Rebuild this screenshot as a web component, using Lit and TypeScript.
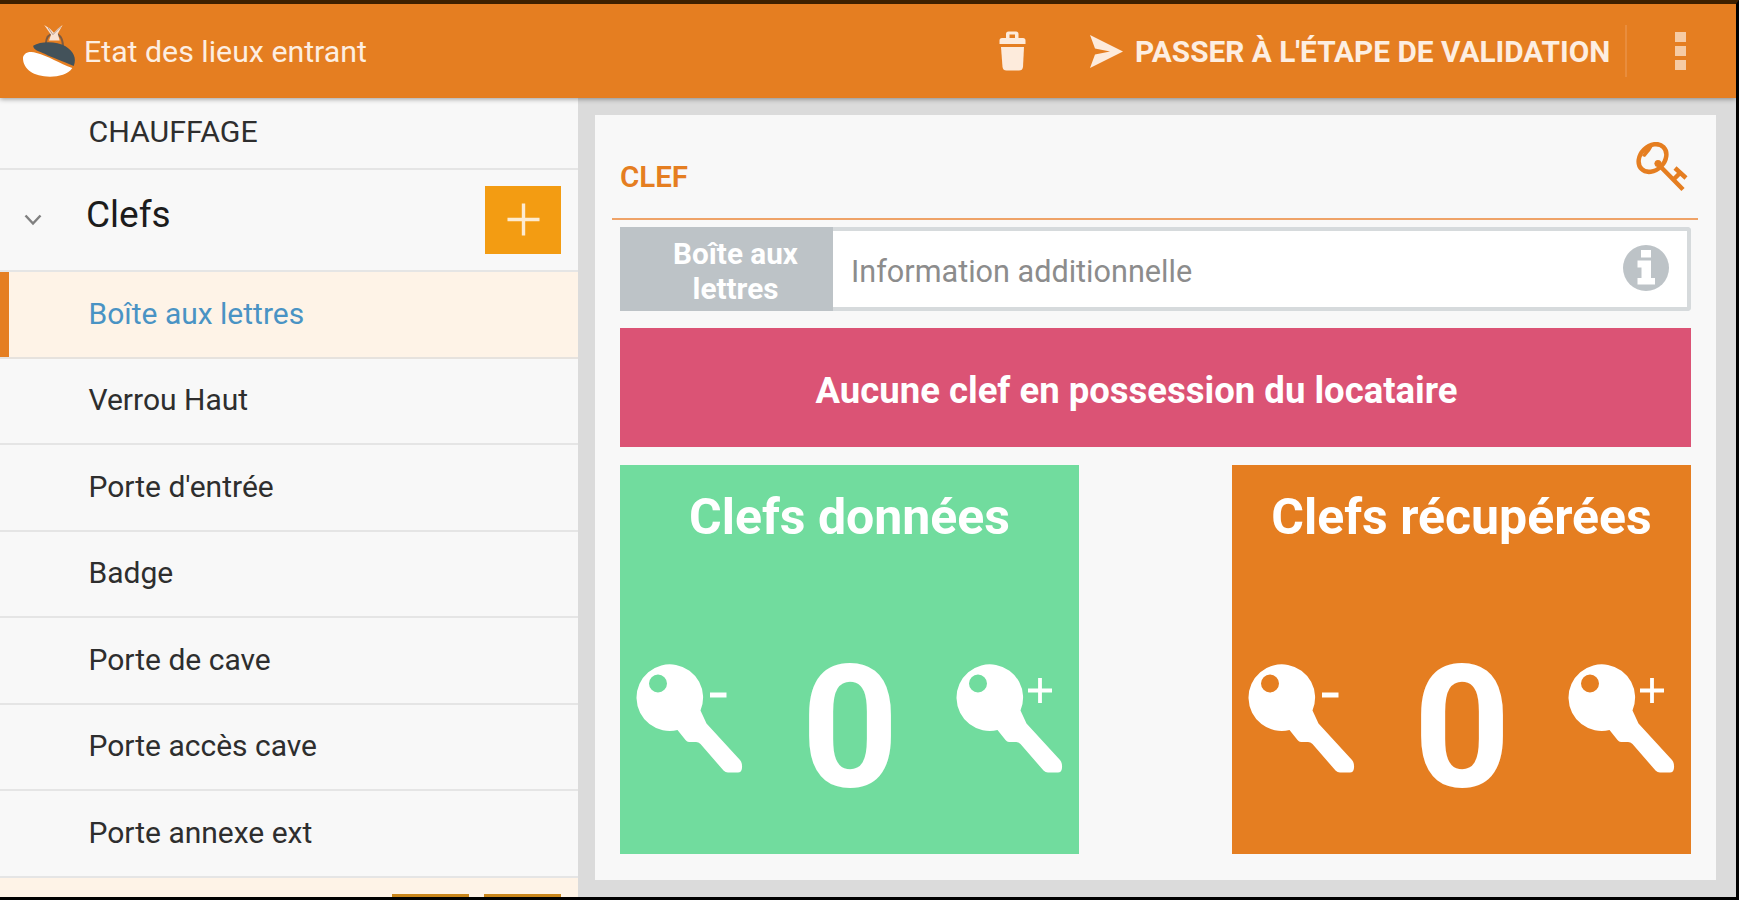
import { LitElement, html, svg, css, nothing, type CSSResultGroup } from "lit";
import { customElement, property, state } from "lit/decorators.js";
import { classMap } from "lit/directives/class-map.js";

@customElement("edl-header")
export class EdlHeader extends LitElement {
  @property() public heading = "";
  @property() public action = "";

  protected render() {
    return html`
      <svg class="logo" viewBox="0 0 60 60">
        <path
          d="M24.500 21C25 13 28 10 33 10S42 13 42.500 23"
          fill="none"
          stroke="#7d5a40"
          stroke-width="2"
        />
        <path d="M11.500 22.500C20 17.500 36 18 45 23C53 28 57 35 53.500 43.500C42 38 31 35 24 31C17 28 12 27 11.500 22.500Z" fill="#43525a" />
        <path d="M1 35C2 29 9 28 15 30C27 33 39 41 52 45.500C48 52 38 54.500 29 54.500C12 54.500 1 47 1 35Z" fill="#fff" />
        <path d="M23 1L29 5L33 9L37 5L42 1L37 10L39 17H28L30 11Z" fill="#f9e2d2" />
        <path d="M27 4L32 11L40 3" fill="none" stroke="#b39a90" stroke-width="1" />
      </svg>
      <div class="title">${this.heading}</div>
      <svg class="trash" viewBox="0 0 27 40">
        <path
          d="M0.500 13V9.500Q0.500 7 3 7H7V3Q7 0.500 9.500 0.500H17Q19.500 0.500 19.500 3V7H24Q26.500 7 26.500 9.500V13ZM10.500 7H16V3.500H10.500Z"
          fill-rule="evenodd"
        />
        <path d="M2 16H25L24 36Q23.500 39.500 20 39.500H7.500Q4 39.500 3.500 36Z" />
      </svg>
      <svg class="send" viewBox="0 0 33 33">
        <path d="M0 0L33 16.500L0 33L5 19.500L20 16.500L5 13.500Z" />
      </svg>
      <div class="action">${this.action}</div>
      <div class="divider"></div>
      <div class="menu"><i></i><i></i><i></i></div>
    `;
  }

  static get styles(): CSSResultGroup {
    return css`
      :host {
        display: flex;
        align-items: center;
        height: 94px;
        flex-shrink: 0;
        box-sizing: border-box;
        padding: 0 50px 0 22px;
        background: #e57e21;
        box-shadow: 0 1px 5px rgba(0, 0, 0, 0.4);
        position: relative;
        z-index: 1;
        color: #fdeee1;
        fill: #fdebdc;
      }
      .logo {
        width: 58px;
        height: 58px;
        margin-top: 4px;
      }
      .title {
        flex: 1;
        margin-left: 4px;
        font-size: 30.3px;
        white-space: nowrap;
      }
      .trash {
        width: 27px;
        height: 40px;
      }
      .send {
        width: 33px;
        height: 33px;
        margin-left: 64px;
      }
      .action {
        width: 473px;
        margin-left: 12px;
        font-size: 29.8px;
        font-weight: 700;
        white-space: nowrap;
      }
      .divider {
        width: 2px;
        height: 52px;
        margin-left: 17px;
        background: #e98d3d;
      }
      .menu {
        display: flex;
        flex-direction: column;
        gap: 4px;
        margin-left: 48px;
      }
      .menu i {
        width: 11px;
        height: 10px;
        background: #f6cba4;
      }
    `;
  }
}

@customElement("edl-sidebar")
export class EdlSidebar extends LitElement {
  @property() public previous = "";
  @property() public section = "";
  @property({ attribute: false }) public items: string[] = [];
  @property() public selected = "";

  protected render() {
    return html`
      <div class="row first">${this.previous}</div>
      <div class="row section">
        <svg class="chevron" viewBox="0 0 18 12"><path d="M1.500 1.500L9 9.500L16.500 1.500" /></svg>
        <span class="name">${this.section}</span>
        <div class="add">
          <svg viewBox="0 0 34 34"><path d="M17 0.500V33.500M0.500 17H33.500" /></svg>
        </div>
      </div>
      ${this.items.map(
        (item) => html`
          <div class=${classMap({ row: true, item: true, selected: item === this.selected })}>
            ${item}
          </div>
        `
      )}
      <div class="next"><i></i><i></i></div>
    `;
  }

  static get styles(): CSSResultGroup {
    return css`
      :host {
        display: flex;
        flex-direction: column;
        width: 578px;
        flex-shrink: 0;
        overflow: hidden;
        background: #f8f8f8;
        color: #2e2e2e;
        font-size: 30px;
      }
      .row {
        display: flex;
        align-items: center;
        flex-shrink: 0;
        box-sizing: border-box;
        padding-left: 88.5px;
        border-bottom: 2px solid #e5e5e5;
      }
      .first {
        height: 71.5px;
        padding-bottom: 2px;
        font-size: 30.3px;
      }
      .section {
        height: 102.5px;
        padding: 0 17px 0 24px;
        color: #1c1c1c;
        font-size: 37px;
      }
      .chevron {
        width: 18px;
        height: 12px;
        fill: none;
        stroke: #808080;
        stroke-width: 2.5;
      }
      .name {
        flex: 1;
        margin-left: 44px;
        padding-bottom: 11px;
      }
      .add {
        display: flex;
        align-items: center;
        justify-content: center;
        width: 76px;
        height: 68px;
        background: #f39c12;
      }
      .add svg {
        width: 33px;
        height: 33px;
        stroke: #fdebd0;
        stroke-width: 3.5;
      }
      .item {
        height: 86.5px;
        padding-bottom: 2.5px;
      }
      .selected {
        border-bottom-color: #e6e2de;
        background: #fef3e7;
        box-shadow: inset 9px 0 #e57e21;
        color: #4a93c4;
      }
      .next {
        display: flex;
        flex: 1;
        align-items: flex-end;
        justify-content: flex-end;
        gap: 15px;
        padding-right: 17px;
        background: #fef3e7;
      }
      .next i {
        width: 77px;
        height: 3px;
        background: #c9861b;
      }
    `;
  }
}

@customElement("edl-key-tile")
export class EdlKeyTile extends LitElement {
  @property() public label = "";
  @property({ type: Number }) public count = 0;

  private _key(plus: boolean) {
    return html`
      <svg class="key" viewBox="0 0 108 112">
        <path
          fill-rule="evenodd"
          d="M64.500 48.500L70.500 61.500L104 98Q106.500 101 106 106Q105.500 110.500 102 110.500H92Q89.500 110.500 87.500 108.500L64.500 82Q62.500 80 60 80H53Q51 80 49.500 78L41.500 68A33.300 33.300 0 1 1 64.500 48.500ZM31 21.500A9 9 0 1 0 13 21.500A9 9 0 1 0 31 21.500Z"
        />
        ${plus
          ? svg`<path class="sign" d="M84 16V41M72 28.500H96" />`
          : svg`<path class="sign minus" d="M74 33H90.500" />`}
      </svg>
    `;
  }

  protected render() {
    return html`
      <div class="label">${this.label}</div>
      <div class="controls">
        ${this._key(false)}
        <div class="count">${this.count}</div>
        ${this._key(true)}
      </div>
    `;
  }

  static get styles(): CSSResultGroup {
    return css`
      :host {
        display: flex;
        flex-direction: column;
        width: 459px;
        height: 389px;
        background: #71dc9e;
        color: #fff;
      }
      :host([tone="orange"]) {
        background: #e57e21;
      }
      .label {
        margin-top: 24px;
        font-size: 50px;
        line-height: 56px;
        font-weight: 700;
        text-align: center;
        white-space: nowrap;
      }
      .controls {
        display: flex;
        align-items: center;
        justify-content: space-between;
        height: 128px;
        margin: 115px 15px 0 16px;
      }
      .key {
        width: 108px;
        height: 112px;
        margin-top: -12px;
        fill: #fff;
        overflow: visible;
      }
      .sign {
        fill: none;
        stroke: #fff;
        stroke-width: 3.8;
      }
      .sign.minus {
        stroke-width: 5;
      }
      .count {
        padding-top: 7px;
        font-size: 170px;
        line-height: 128px;
        font-weight: 700;
      }
    `;
  }
}

@customElement("app-root")
export class AppRoot extends LitElement {
  @state() private _selected = "Boîte aux lettres";
  @state() private _given = 0;
  @state() private _returned = 0;

  private _items = [
    "Boîte aux lettres",
    "Verrou Haut",
    "Porte d'entrée",
    "Badge",
    "Porte de cave",
    "Porte accès cave",
    "Porte annexe ext",
  ];

  protected render() {
    return html`
      <edl-header
        heading="Etat des lieux entrant"
        action="PASSER À L'ÉTAPE DE VALIDATION"
      ></edl-header>
      <div class="body">
        <edl-sidebar
          previous="CHAUFFAGE"
          section="Clefs"
          .items=${this._items}
          selected=${this._selected}
        ></edl-sidebar>
        <div class="content">
          <div class="card">
            <div class="card-header">
              <span>CLEF</span>
              <svg class="key-icon" viewBox="0 0 52 52">
                <g fill="none" stroke="#e57e21" stroke-width="4.500">
                  <ellipse cx="16.500" cy="16" rx="15.500" ry="12" transform="rotate(-45 16.500 16)" />
                  <path d="M20 20L47 47.500M37 38L44 31M39 26L50 36" />
                </g>
                <path d="M6 14L10 7L17 4L14 9L9 15Z" fill="#e57e21" />
                <circle cx="22" cy="21.500" r="3.500" fill="#e57e21" />
              </svg>
            </div>
            <div class="field">
              <div class="field-label">Boîte aux<br />lettres</div>
              <div class="placeholder">Information additionnelle</div>
              <svg class="info" viewBox="0 0 46 46">
                <circle cx="23" cy="23" r="23" fill="#bdc3c7" />
                <path d="M18 5H28V12.500H18ZM14.500 15.500H28V33H32V39.500H14.500V33H18.500V22.500H14.500Z" fill="#fff" />
              </svg>
            </div>
            ${this._given === this._returned
              ? html`<div class="alert">Aucune clef en possession du locataire</div>`
              : nothing}
            <div class="tiles">
              <edl-key-tile label="Clefs données" .count=${this._given}></edl-key-tile>
              <edl-key-tile
                tone="orange"
                label="Clefs récupérées"
                .count=${this._returned}
              ></edl-key-tile>
            </div>
          </div>
        </div>
      </div>
    `;
  }

  static get styles(): CSSResultGroup {
    return css`
      :host {
        display: flex;
        flex-direction: column;
        box-sizing: border-box;
        width: 1739px;
        height: 900px;
        overflow: hidden;
        border-top: 4px solid #3d2000;
        border-right: 3px solid #000;
        border-bottom: 3px solid #000;
        background: #dbdbdb;
        font-family: Roboto, "Liberation Sans", sans-serif;
      }
      .body {
        display: flex;
        flex: 1;
        min-height: 0;
      }
      .content {
        flex: 1;
        padding: 17px 20px 17px 17px;
      }
      .card {
        display: flex;
        flex-direction: column;
        box-sizing: border-box;
        height: 765px;
        padding: 0 25px;
        background: #f8f8f8;
      }
      .card-header {
        display: flex;
        align-items: center;
        justify-content: space-between;
        height: 105px;
        box-sizing: border-box;
        padding: 21px 10px 0 8px;
        margin: 0 -7px 0 -8px;
        border-bottom: 2px solid #efa368;
        color: #e57e21;
        font-size: 29.5px;
        font-weight: 600;
      }
      .key-icon {
        width: 52px;
        height: 52px;
        margin-bottom: 18px;
      }
      .field {
        display: flex;
        align-items: center;
        box-sizing: border-box;
        height: 84px;
        margin-top: 7px;
        padding-right: 18px;
        border: 4px solid #d6dadc;
        border-left: 0;
        border-radius: 0 4px 4px 0;
        background: #fff;
      }
      .field-label {
        box-sizing: border-box;
        width: 213px;
        height: 84px;
        flex-shrink: 0;
        padding: 9px 0 0 18px;
        background: #bdc3c7;
        color: #fff;
        font-size: 29.7px;
        line-height: 35px;
        font-weight: 700;
        text-align: center;
      }
      .placeholder {
        flex: 1;
        margin-left: 18px;
        padding-top: 4px;
        color: #8c8c8c;
        font-size: 30.6px;
      }
      .info {
        width: 46px;
        height: 46px;
        margin-top: -3px;
      }
      .alert {
        display: flex;
        align-items: center;
        justify-content: center;
        height: 119px;
        margin-top: 17px;
        padding: 6px 38px 0 0;
        box-sizing: border-box;
        background: #db5375;
        color: #fff;
        font-size: 36.5px;
        font-weight: 700;
      }
      .tiles {
        display: flex;
        justify-content: space-between;
        margin-top: 18px;
      }
    `;
  }
}
